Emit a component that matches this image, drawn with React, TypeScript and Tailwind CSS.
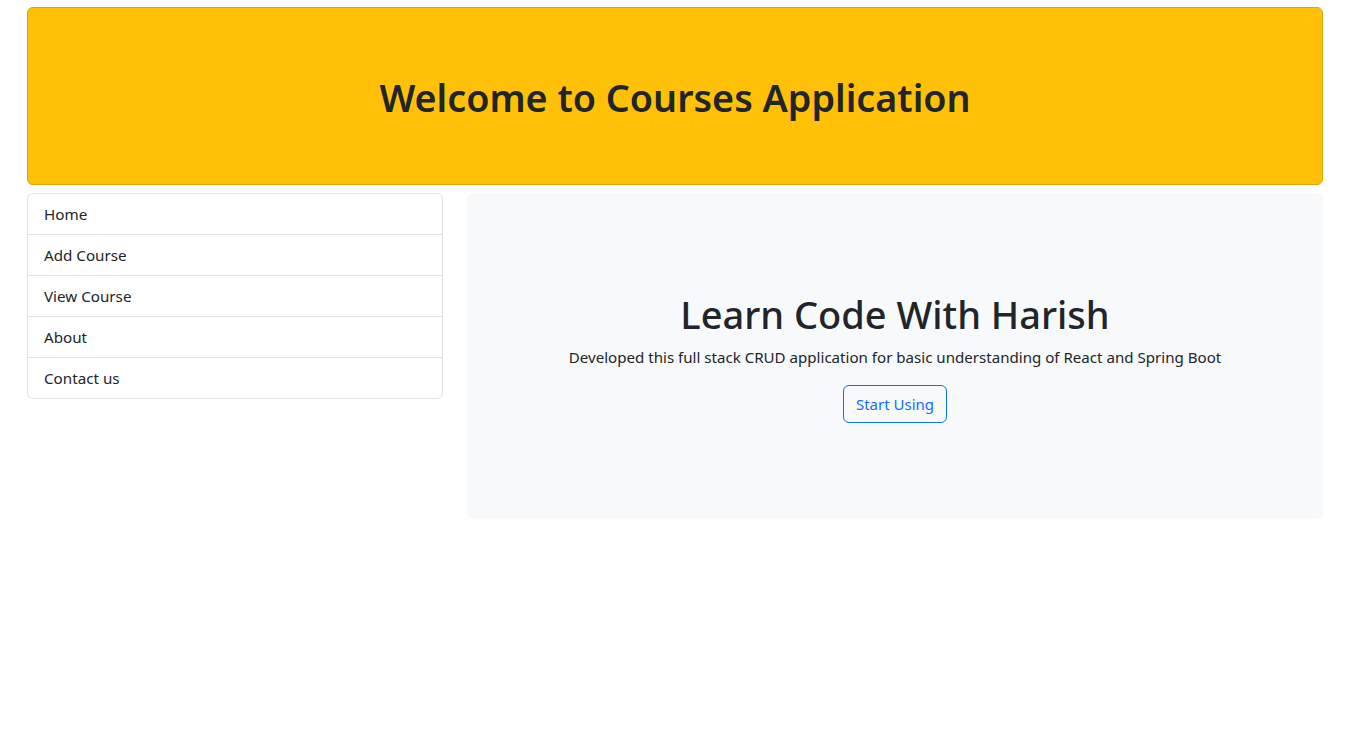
const menu = ['Home', 'Add Course', 'View Course', 'About', 'Contact us'];

export default function App() {
  return (
    <div
      className="min-h-screen bg-white text-[#212529]"
      style={{ fontFamily: '"Noto Sans", "Open Sans", sans-serif' }}
    >
      <div className="w-[1296px] ml-[27px] pt-[7px]">
        {/* header */}
        <div className="h-[178px] rounded-md border border-[#d9a406] bg-[#ffc107] flex items-center justify-center">
          <h1 className="text-[37.7px] font-semibold leading-[1.2] pt-[3px]">
            Welcome to Courses Application
          </h1>
        </div>

        <div className="flex gap-6 mt-2">
          {/* side menu */}
          <div className="w-[416px] self-start rounded-md border border-[#dee2e6] bg-white">
            {menu.map((item, i) => (
              <a
                key={item}
                href="#"
                className={
                  'block px-4 h-10 leading-10 text-[15.2px] text-[#212529] ' +
                  (i > 0 ? 'border-t border-[#dee2e6] h-[41px]' : '')
                }
              >
                {item}
              </a>
            ))}
          </div>

          {/* main box */}
          <div className="flex-1 h-[326px] rounded-md bg-[#f8f9fa] flex flex-col items-center justify-center text-center pt-[5px]">
            <h1 className="text-[38px] font-medium leading-[1.2] -mt-[2px]">Learn Code With Harish</h1>
            <p className="text-[15.1px] leading-6 mt-[7px]">
              Developed this full stack CRUD application for basic understanding of React and Spring Boot
            </p>
            <button className="mt-4 h-[38px] px-3 rounded-md border border-[#0d6efd] text-[#0d6efd] text-[15px] bg-transparent">
              Start Using
            </button>
          </div>
        </div>
      </div>
    </div>
  );
}
